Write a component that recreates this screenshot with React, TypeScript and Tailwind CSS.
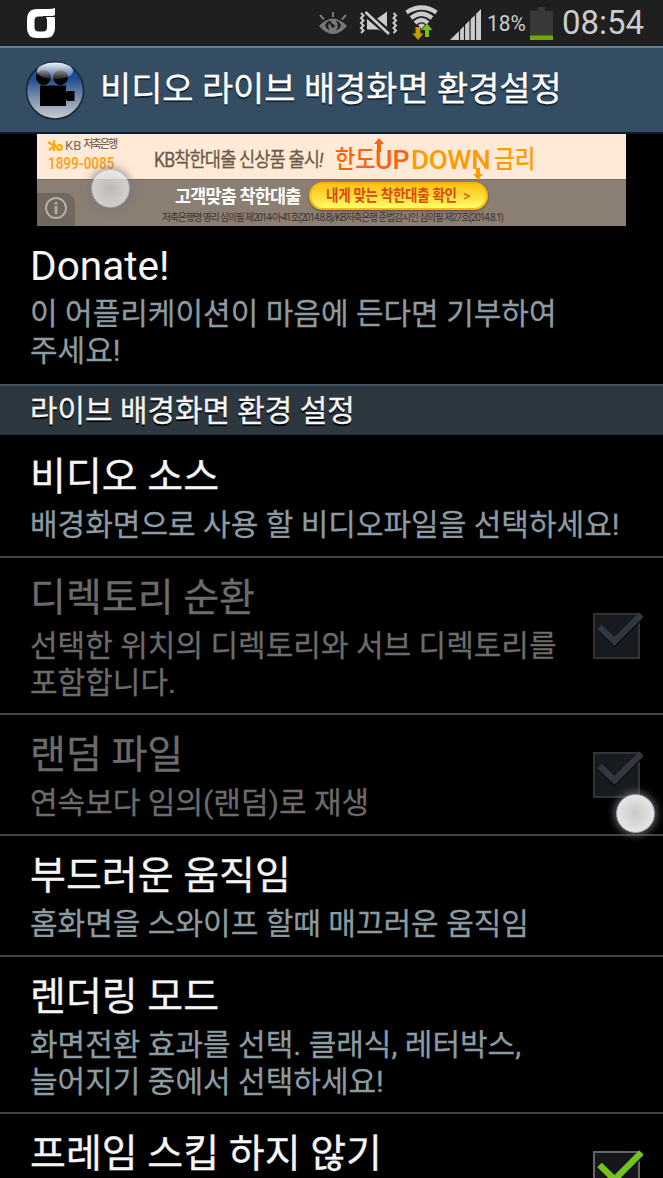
import React from 'react';
import clsx from 'clsx';

interface Preference {
  title: string;
  summary: string[];
  disabled?: boolean;
  check?: 'off' | 'on';
}

const preferences: Preference[] = [
  { title: '비디오 소스', summary: ['배경화면으로 사용 할 비디오파일을 선택하세요!'] },
  {
    title: '디렉토리 순환',
    summary: ['선택한 위치의 디렉토리와 서브 디렉토리를', '포함합니다.'],
    disabled: true,
    check: 'off',
  },
  { title: '랜덤 파일', summary: ['연속보다 임의(랜덤)로 재생'], disabled: true, check: 'off' },
  { title: '부드러운 움직임', summary: ['홈화면을 스와이프 할때 매끄러운 움직임'] },
  { title: '렌더링 모드', summary: ['화면전환 효과를 선택. 클래식, 레터박스,', '늘어지기 중에서 선택하세요!'] },
  { title: '프레임 스킵 하지 않기', summary: [], check: 'on' },
];

function StatusBar() {
  return (
    <div className="flex h-[46px] shrink-0 items-start bg-[#1f1f1f] text-[#cbcbcb]">
      <svg className="ml-[26px] mt-[7px]" width="30" height="32" viewBox="0 0 30 32">
        <path
          fillRule="evenodd"
          fill="#fff"
          d="M29 1v7q-1 1-3 1h2.500q.500 2 .500 4v8q0 10-10 10h-8q-10 0-10-10v-8q0-11 10-11h11q5 0 7-1ZM12.500 9.500q-4 0-4 4v7q0 4 4 4h4.500q4 0 4-4v-7q0-4-3-4Z"
        />
        <path d="M17 9.500h12" stroke="#1f1f1f" strokeWidth="1" />
      </svg>
      <svg className="ml-[262px] mt-3" width="30" height="23" viewBox="0 0 30 23" fill="none" stroke="#777">
        <path d="M1 14Q15-1 29 14Q15 30 1 14Z" fill="#777" stroke="none" />
        <path d="M7 13Q9 9 12 8.500Q8.500 14 12 18.500Q8 17 7 13ZM23 13Q21 9 18 8.500Q21.500 14 18 18.500Q22 17 23 13Z" fill="#1f1f1f" stroke="none" />
        <path d="M15 14L11 9.500" stroke="#1f1f1f" strokeWidth="2.200" />
        <circle cx="15" cy="14" r="1.800" fill="#1f1f1f" stroke="none" />
        <path d="M15 0v5M2 3l4 4.500M28 3l-4 4.500" strokeWidth="2" />
      </svg>
      <svg className="ml-[11px] mt-[11px]" width="39" height="25" viewBox="0 0 39 25">
        <path d="M8 8.500h9l11-8v22.500L17 17.500H8Z" fill="#cbcbcb" />
        <path d="M5 1L32 24" stroke="#1f1f1f" strokeWidth="7" />
        <path d="M6.500 1L30 23" stroke="#cbcbcb" strokeWidth="2.600" />
        <path d="M8 8l12 10.500H8Z" fill="#cbcbcb" />
        <path
          d="M2 2l2.500 2.500L2 7l2.500 2.500L2 12l2.500 2.500L2 17l2.500 2.500L2 22M34.500 2l2.500 2.500L34.500 7l2.500 2.500L34.500 12l2.500 2.500L34.500 17l2.500 2.500L34.500 22"
          fill="none"
          stroke="#cbcbcb"
          strokeWidth="2"
        />
      </svg>
      <svg className="ml-[7px] mt-[5px]" width="33" height="36" viewBox="0 0 33 36">
        <g fill="none" stroke="#cbcbcb" strokeWidth="4.200">
          <path d="M1.500 7.500Q16.500-2.500 31.500 7.500" />
          <path d="M6 13Q16.500 4.500 27 13" />
          <path d="M10 18Q16.500 12 23 18" />
        </g>
        <path d="M13 20q3.500-3 7 0L16.500 24Z" fill="#cbcbcb" />
        <path d="M10.500 22h5v6.500h3L13 35l-5.500-6.500h3Z" fill="#c99a00" />
        <path d="M20 32v-7h-3.500l5.500-6.500 5.500 6.500H24v7Z" fill="#7ac10a" />
      </svg>
      <svg className="ml-[12px] mt-[9px]" width="31" height="31" viewBox="0 0 31 31">
        <path d="M0 31L31 0v31Z" fill="#cbcbcb" />
        <path d="M9.500 14v17M14.500 9v22M20 5v26M25.500 0v31" stroke="#1f1f1f" strokeWidth="1.200" />
      </svg>
      <span className="ml-[6px] mt-[9px] w-[39px] origin-left scale-x-[0.95] text-[22px] leading-[30px] whitespace-nowrap">
        18%
      </span>
      <svg className="ml-[4px] mt-[7px]" width="23" height="33" viewBox="0 0 23 33">
        <path d="M8 0h7v4h8v29H0V4h8Z" fill="#383838" />
        <path d="M0 28.500h23V33H0Z" fill="#72a700" />
      </svg>
      <span className="ml-[9px] mt-[2px] origin-left scale-x-[0.97] text-[34px] leading-[40px] whitespace-nowrap">08:54</span>
    </div>
  );
}

function AppIcon() {
  return (
    <svg width="60" height="60" viewBox="0 0 60 60">
      <defs>
        <linearGradient id="ball" x1="0" y1="0" x2="0" y2="1">
          <stop offset="0" stopColor="#0a3f94" />
          <stop offset="0.300" stopColor="#234f8f" />
          <stop offset="0.650" stopColor="#8293ae" />
          <stop offset="1" stopColor="#c9ccd0" />
        </linearGradient>
        <linearGradient id="gloss" x1="0" y1="0" x2="0" y2="1">
          <stop offset="0" stopColor="#fff" stopOpacity="0.950" />
          <stop offset="1" stopColor="#fff" stopOpacity="0.100" />
        </linearGradient>
      </defs>
      <circle cx="30" cy="30.500" r="28.500" fill="url(#ball)" stroke="#15253a" strokeWidth="1.500" />
      <g fill="#000">
        <circle cx="18.500" cy="17.500" r="7.500" />
        <circle cx="35.500" cy="17.500" r="7.500" />
        <path d="M15 25.500h26v20.500H15ZM41 33l1-2h7.500v10H42l-1-2Z" />
      </g>
      <ellipse cx="30" cy="11" rx="18" ry="8.500" fill="url(#gloss)" />
    </svg>
  );
}

function Header() {
  return (
    <header className="flex h-[88px] shrink-0 items-center border-t-2 border-b-2 border-t-[#637f98] border-b-[#0b1c31] bg-[#344d63] pl-[25px]">
      <AppIcon />
      <h1 className="ml-[15px] text-[33.9px] leading-[44px] whitespace-nowrap text-white [-webkit-text-stroke:0.3px_#fff] [text-shadow:0_2px_1px_#14222f]">
        비디오 라이브 배경화면 환경설정
      </h1>
    </header>
  );
}

function AdBanner() {
  return (
    <div className="relative mx-[37px] flex h-[92px] shrink-0 flex-col overflow-hidden bg-[#8b7e73] whitespace-nowrap">
      <div className="flex h-[45px] shrink-0 bg-[#ffead7]">
        <div className="w-[117px] pt-1 pl-[11px]">
          <div className="flex h-[15px] items-center text-[12px] text-[#76675a]">
            <svg className="mr-[2px]" width="15" height="12" viewBox="0 0 15 12" fill="none" stroke="#ffab0b" strokeWidth="2.200">
              <path d="M0 2l8 5M6 0v11M1 10l7-5" />
              <circle cx="11.500" cy="7.500" r="2.400" />
            </svg>
            <span className="text-[13px]">KB</span>
            <span className="ml-[2px] text-[11px] font-medium tracking-[-1.900px]">저축은행</span>
          </div>
          <div className="mt-[2px] origin-left scale-x-[0.84] text-[16px] leading-[18px] font-semibold text-[#ffa01c]">
            1899-0085
          </div>
        </div>
        <div className="w-[181px] origin-left scale-x-[0.88] pt-[12px] text-[20px] leading-[28px] font-normal tracking-[-1px] text-[#6d5a4c] [-webkit-text-stroke:0.3px_currentColor]">
          KB착한대출 신상품 출시<i>!</i>
        </div>
        <div className="relative flex pt-[11px] text-[25px] leading-[30px] font-medium text-[#f9650e]">
          <div className="w-[40px] origin-left scale-x-[0.88]">한도</div>
          <div className="w-[36px] origin-left scale-x-[1.03] text-[26px]">UP</div>
          <div className="w-[83px] origin-left scale-x-[1.06] text-[26px] tracking-[-0.300px] text-[#ff9b00]">DOWN</div>
          <div className="origin-left scale-x-[0.9] text-[#ff9b00]">금리</div>
          <svg className="absolute top-[4px] left-[38px]" width="12" height="14" viewBox="0 0 12 14">
            <path d="M6 0l5 6H8v8H4V6H1Z" fill="#f9650e" />
          </svg>
          <svg className="absolute top-[34px] left-[137px]" width="12" height="12" viewBox="0 0 12 12">
            <path d="M4 0h4v6h3l-5 6-5-6h3Z" fill="#ff9b00" />
          </svg>
        </div>
      </div>
      <div className="flex h-[30px] shrink-0 border-t border-[#786b61]">
        <div className="ml-[138px] w-[134px] origin-left scale-x-[0.94] pt-[4px] text-[18.500px] leading-[26px] font-bold tracking-[-0.800px] text-white">
          고객맞춤 착한대출
        </div>
        <div className="mt-[2px] h-[28px] w-[179px] shrink-0 rounded-full border-2 border-[#ffb50c] bg-linear-to-b from-[#ffc414] via-[#ffdb38] to-[#ffff67] pl-[15px] text-[15.500px] leading-[24px] font-bold text-[#d74a12] shadow-[0_1px_2px_#55483d]">
          <div className="origin-left scale-x-[0.87] tracking-[-0.300px]">
            내게 맞는 착한대출 확인 <span className="ml-1 font-normal">&gt;</span>
          </div>
        </div>
      </div>
      <div className="ml-[125px] mt-px origin-left scale-x-[0.975] text-[10px] leading-[16px] tracking-[-1.100px] text-[#40352d]">
        저축은행명 영리 심의필 제2014-아-41호(2014.8.8)/KB저축은행 준법감시인 심의필 제27호(2014.8.1)
      </div>
      <div className="absolute bottom-0 left-0 flex h-[33px] w-[38px] items-center justify-center rounded-tr-[10px] bg-[#70675f]">
        <svg className="mb-[4px]" width="24" height="24" viewBox="0 0 24 24" fill="none" stroke="#b9b2aa">
          <circle cx="12" cy="12" r="10" strokeWidth="1.800" />
          <path d="M12 10v8M12 6v2.500" strokeWidth="2.600" />
        </svg>
      </div>
      <TouchDot className="top-[35px] left-[54px] opacity-80" />
    </div>
  );
}

function TouchDot({ className }: { className: string }) {
  return (
    <div
      className={clsx(
        'absolute size-[39px] rounded-full border border-[#aaa9c9] bg-[radial-gradient(circle,#c9c9c9_0%,#e3e3e3_65%,#ededed_100%)] shadow-[0_0_8px_1px_#777]',
        className
      )}
    />
  );
}

function Checkbox({ on }: { on: boolean }) {
  return (
    <svg className="absolute top-1/2 right-[20px] mt-[-28px]" width="52" height="52" viewBox="0 0 52 52">
      <rect x="3" y="6" width="45" height="44" fill={on ? '#15171b' : '#171b20'} stroke={on ? '#666' : '#333'} strokeWidth="2" />
      <path d="M9 21L23.500 35.500L50 9" fill="none" stroke="#08090b" strokeWidth="6" />
      <path d="M8.500 19L23.500 33.500L50.500 6.500" fill="none" stroke={on ? '#72c51d' : '#303741'} strokeWidth="6.500" />
    </svg>
  );
}

function PreferenceRow({ item }: { item: Preference }) {
  return (
    <div className="relative min-h-[121px] shrink-0 border-b-2 border-[#444] pt-[15px] pb-[12px] pl-[30px] whitespace-nowrap">
      <div
        className={clsx(
          'h-[50px] text-[39px] leading-[50px] [-webkit-text-stroke:0.3px_currentColor]',
          item.disabled ? 'text-[#6b6b6b]' : 'text-[#f5f5f5]'
        )}
      >
        {item.title}
      </div>
      <div
        className={clsx(
          'mt-[4px] text-[30px] leading-[37px] [-webkit-text-stroke:0.3px_currentColor]',
          item.disabled ? 'text-[#6b6b6b]' : 'text-[#8c9ba1]'
        )}
      >
        {item.summary.map((line) => (
          <div key={line}>{line}</div>
        ))}
      </div>
      {item.check && <Checkbox on={item.check === 'on'} />}
      {item.title === '랜덤 파일' && <TouchDot className="top-[79px] right-[8px]" />}
    </div>
  );
}

export default function App() {
  return (
    <div className="flex h-[1178px] w-[663px] flex-col overflow-hidden bg-black font-['Roboto','Noto_Sans_CJK_KR',sans-serif]">
      <StatusBar />
      <Header />
      <AdBanner />
      <div className="h-[158px] shrink-0 pt-[16px] pl-[30px] whitespace-nowrap">
        <div className="h-[50px] origin-left scale-x-[1.015] text-[40px] leading-[50px] text-[#f5f5f5]">Donate!</div>
        <div className="mt-[3px] text-[30px] leading-[37px] text-[#8c9ba1] [-webkit-text-stroke:0.3px_currentColor]">
          <div>이 어플리케이션이 마음에 든다면 기부하여</div>
          <div>주세요!</div>
        </div>
      </div>
      <div className="mb-[2px] h-[51px] shrink-0 border-t-2 border-b border-t-[#405361] border-b-[#23303a] bg-[#2d3740] pl-[30px] text-[29.900px] leading-[50px] text-[#f5f5f5] [-webkit-text-stroke:0.3px_currentColor] [text-shadow:0_2px_1px_#000]">
        라이브 배경화면 환경 설정
      </div>
      {preferences.map((item) => (
        <PreferenceRow key={item.title} item={item} />
      ))}
    </div>
  );
}
